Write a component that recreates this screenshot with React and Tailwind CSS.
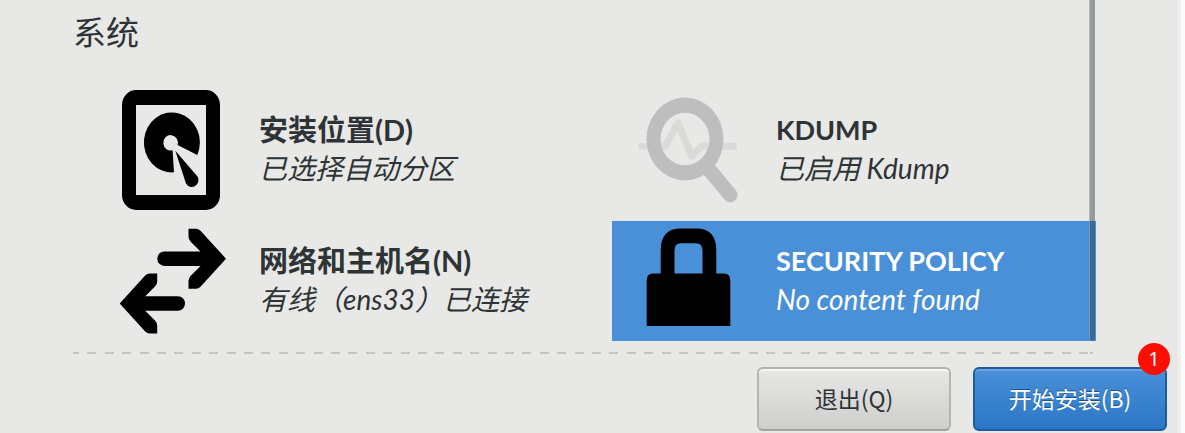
function DiskIcon() {
  return (
    <svg viewBox="0 0 120 120" className="w-[120px] h-[120px] shrink-0" aria-hidden="true">
      <path
        fillRule="evenodd"
        d="M23 0H93A14 15 0 0 1 107 15V105A14 15 0 0 1 93 120H23A14 15 0 0 1 9 105V15A14 15 0 0 1 23 0ZM23 15V105H93V15Z"
      />
      <path d="M61 82.3A28 30 0 1 1 84.3 65L64.6 55A7.3 7.7 0 1 0 59.6 60.2Z" />
      <path d="M62.3 60.7L84.5 86.5A6.6 6.8 0 1 1 73 93.5Z" />
    </svg>
  );
}

function NetworkIcon() {
  return (
    <svg viewBox="0 0 120 120" className="w-[120px] h-[120px] shrink-0" aria-hidden="true">
      <path d="M75.5 7.7H83Q85.5 7.7 87.5 9.7L113 37.7L87.5 65.7Q85.5 67.7 83 67.7H75.5V60Q75.5 57 77.5 55L87.5 45H51.3A7 7.3 0 0 1 51.3 30.4H87.5L77.5 20.4Q75.5 18.4 75.5 15.4Z" />
      <path d="M44.2 52.5H36.7Q34.2 52.5 32.2 54.5L6.7 82.5L32.2 110.5Q34.2 112.5 36.7 112.5H44.2V104.8Q44.2 101.8 42.2 99.8L32.2 89.8H65A7 7.3 0 0 0 65 75.2H32.2L42.2 65.2Q44.2 63.2 44.2 60.2Z" />
    </svg>
  );
}

function KdumpIcon() {
  return (
    <svg viewBox="0 0 120 120" className="w-[120px] h-[120px] shrink-0" aria-hidden="true">
      <path
        d="M8.7 56.3H35L48 33L61.7 66L72 56.3H106.7"
        fill="none"
        stroke="#dadad8"
        strokeWidth="7"
        strokeLinejoin="round"
      />
      <path
        fillRule="evenodd"
        fill="#bebebe"
        d="M16.5 49A38.5 41.5 0 1 1 93.5 49A38.5 41.5 0 1 1 16.5 49ZM30.5 49A24.5 26.2 0 1 0 79.5 49A24.5 26.2 0 1 0 30.5 49Z"
      />
      <path d="M77 77L100.3 105" stroke="#bebebe" strokeWidth="14.5" strokeLinecap="round" />
    </svg>
  );
}

function LockIcon() {
  return (
    <svg viewBox="0 0 120 120" className="w-[120px] h-[120px] shrink-0" aria-hidden="true">
      <path
        fillRule="evenodd"
        d="M30.7 52.5V29.3Q30.7 7.5 51 7.5H66Q86.3 7.5 86.3 29.3V52.5H94Q100.3 52.5 100.3 59.5V105H16.7V59.5Q16.7 52.5 23 52.5ZM44.5 52.5H72.5V29.5Q72.5 22.3 66 22.3H51Q44.5 22.3 44.5 29.5Z"
      />
    </svg>
  );
}

const spokes = [
  { title: "安装位置(D)", status: "已选择自动分区", Icon: DiskIcon },
  { title: "KDUMP", status: "已启用 Kdump", Icon: KdumpIcon, latin: true },
  { title: "网络和主机名(N)", status: "有线（ens33）已连接", Icon: NetworkIcon },
  { title: "SECURITY POLICY", status: "No content found", Icon: LockIcon, latin: true, selected: true },
];

function Spoke({ title, status, Icon, latin, selected }) {
  return (
    <button
      type="button"
      className={`flex items-center gap-[26px] pl-[18px] text-left whitespace-nowrap ${
        selected ? "bg-[#4a90d9] text-white" : "text-[#2e3436]"
      }`}
    >
      <Icon />
      <span className="flex flex-col pb-1 font-[Lato,'Noto_Sans_CJK_SC',sans-serif]">
        <span className={`leading-10 font-bold ${latin ? "text-[27px]" : "text-[29px]"}`}>
          {title}
        </span>
        <span className="text-[28px] leading-9 italic">{status}</span>
      </span>
    </button>
  );
}

function App() {
  return (
    <div className="bg-[#fcfcfc] pr-1">
      <div className="min-h-screen bg-[#e8e8e6] border-r-3 border-[#efefef] font-['Noto_Sans_CJK_SC',sans-serif]">
        <main className="relative ml-[73px] mr-[82px] pt-[11px]">
          <h1 className="text-[33px] leading-10 text-[#2e3436]">系统</h1>

          <div className="grid grid-cols-2 gap-x-[33px] gap-y-[11px] pt-[39px] pl-[22px]">
            {spokes.map((spoke) => (
              <Spoke key={spoke.title} {...spoke} />
            ))}
          </div>

          {/* scrollbar */}
          <div className="absolute right-px top-0 bottom-0 w-[6px] rounded-b-full bg-[#2e3b42]/45 border-l border-white/30"></div>
        </main>

        <div className="ml-[73px] mr-[85px] mt-[11px] h-[2px] bg-[position:-3px_0] bg-[repeating-linear-gradient(90deg,#c4c4c1_0_9px,transparent_9px_17px,#c4c4c1_17px_26px,transparent_26px_35px,#c4c4c1_35px_44px,transparent_44px_52px,#c4c4c1_52px_61px,transparent_61px_70px,#c4c4c1_70px_79px,transparent_79px_87px)]"></div>

        <footer className="flex justify-end gap-[22px] pt-[13px] pr-[11px] text-[23px]">
          <button
            type="button"
            className="w-[194px] h-16 pb-0.5 rounded-md border-2 border-[#b4b4b0] border-b-[#a0a09c] bg-linear-to-b from-[#e7e7e5] to-[#cececc] text-[#2e3436] inset-shadow-[0_2px_#f6f6f5]"
          >
            退出(Q)
          </button>
          <button
            type="button"
            className="relative w-[194px] h-16 pb-0.5 rounded-md border-2 border-[#1f5c9f] bg-linear-to-b from-[#4a90d9] to-[#2a76c6] text-white text-shadow-[0_-1px_#1c5187] inset-shadow-[0_2px_#6aa5e1]"
          >
            开始安装(B)
            <span className="absolute -top-[26px] -right-[5px] flex size-8 items-center justify-center rounded-full bg-[#ff0d00] font-['Noto_Sans',sans-serif] text-xl text-shadow-none">
              1
            </span>
          </button>
        </footer>
      </div>
    </div>
  );
}

export default App;
